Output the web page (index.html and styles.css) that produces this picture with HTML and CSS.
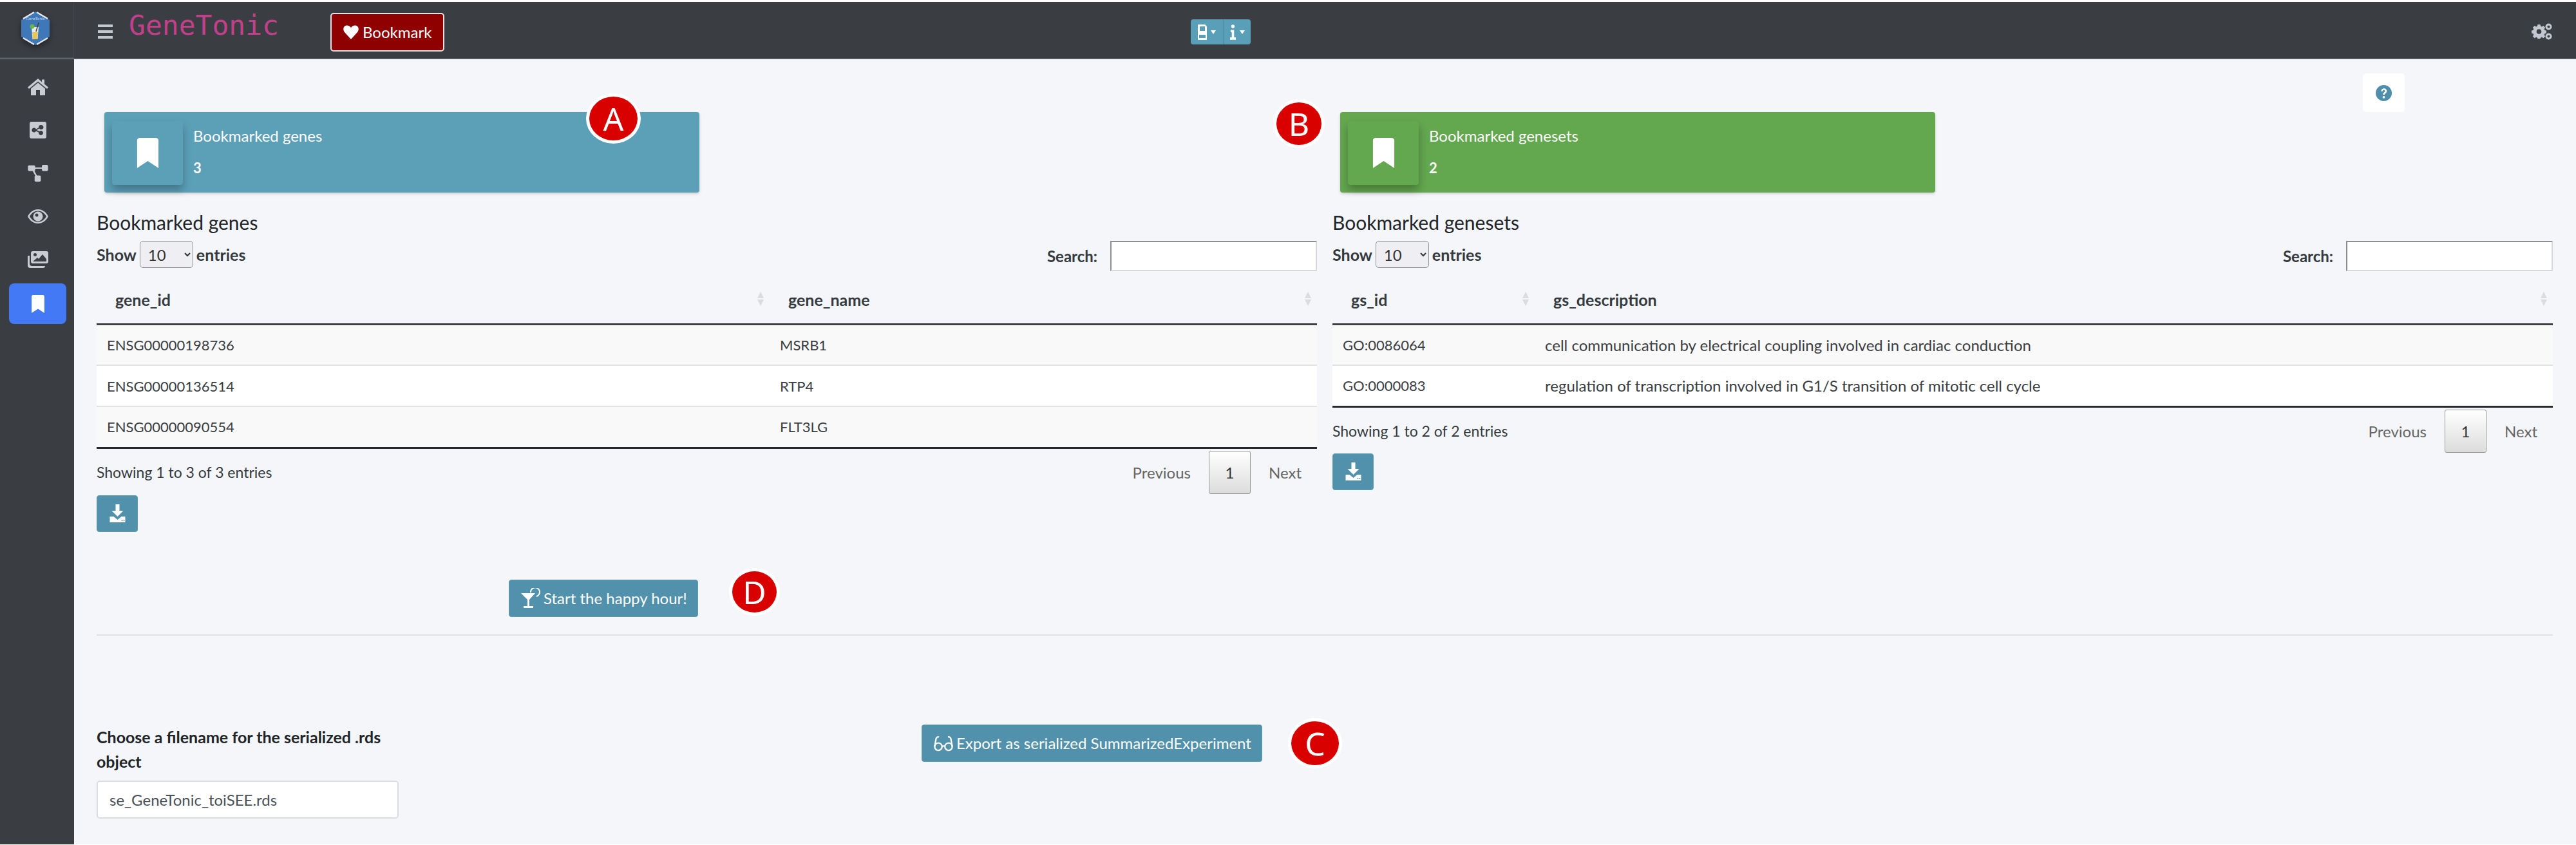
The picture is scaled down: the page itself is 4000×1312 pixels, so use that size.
FILE: index.html
```html
<!DOCTYPE html>
<html lang="en">

<head>
    <meta charset="UTF-8">
    <title>GeneTonic</title>
    <link rel="stylesheet" href="styles.css">
</head>

<body>
    <svg class="defs" width="0" height="0">
        <symbol id="i-bookmark" viewBox="0 0 24 34"><path d="M0 3a3 3 0 0 1 3-3h18a3 3 0 0 1 3 3v31L12 26 0 34z"/></symbol>
        <symbol id="i-download" viewBox="0 0 24 28"><path d="M9 0h6v10h6l-9 9-9-9h6zM0 19h6l6 5 6-5h6v9H0z"/><circle cx="19" cy="25" r="1" fill="#5191ab"/><circle cx="22" cy="25" r="1" fill="#5191ab"/></symbol>
    </svg>

    <header class="topbar">
        <div class="brand">
            <svg class="logo" viewBox="0 0 44 52">
                <path d="M22 0 44 13v26L22 52 0 39V13z" fill="#3f78b8"/>
                <path d="M3 11 20 1M41 11 24 1M3 41l17 10M41 41 24 51" stroke="#e6e8ee" stroke-width="2.4" fill="none"/>
                <path d="M16 24h11l-1.500 19h-8z" fill="#dfeee0"/>
                <path d="M17 32h9l-1 11h-7z" fill="#e6c85a"/>
                <circle cx="17" cy="23" r="3.500" fill="#6fb344"/>
                <path d="M23 31l4-14" stroke="#5a3a2a" stroke-width="1.500"/>
                <text class="logo-text" x="22" y="13" text-anchor="middle">GeneTonic</text>
            </svg>
        </div>
        <div class="topbar-body">
            <div class="hamburger"><span></span><span></span><span></span></div>
            <span class="app-title">GeneTonic</span>
            <button class="bookmark-btn">
                <svg class="heart" viewBox="0 0 24 22"><path d="M12 22 2 11C-1 7 0 2 4 .7 7 0 10 1 12 4c2-3 5-4 8-3.300 4 1.300 5 6.300 2 10.300z"/></svg>
                Bookmark
            </button>
            <div class="center-tools">
                <div class="tool-group">
                    <span class="tool">
                        <svg class="tool-icon" viewBox="0 0 14 24"><path fill-rule="evenodd" d="M1 0h10l3 3v20a1 1 0 0 1-1 1H1a1 1 0 0 1-1-1V1a1 1 0 0 1 1-1zm2 3v7h8V3zm-1 13v5h10v-5z"/></svg>
                        <i class="caret"></i>
                    </span>
                    <span class="tool tool-last">
                        <svg class="tool-icon tool-i" viewBox="0 0 10 26"><circle cx="5" cy="3" r="3"/><path d="M1 9h6v13h3v4H0v-4h3v-9H1z"/></svg>
                        <i class="caret"></i>
                    </span>
                </div>
            </div>
            <svg class="cogs" viewBox="0 0 32 26">
                <g fill="#c2c7d0">
                    <path d="M10.500 5h4l.6 2.600 1.900.8 2.300-1.400 2.800 2.800-1.400 2.300.8 1.900 2.500.6v4l-2.500.6-.8 1.900 1.400 2.300-2.800 2.800-2.300-1.400-1.900.8-.6 1.600h-4l-.6-1.600-1.900-.8-2.300 1.400-2.800-2.800 1.400-2.300-.8-1.900-2.500-.6v-4l2.500-.6.8-1.900-1.400-2.300 2.800-2.800 2.300 1.400 1.900-.8z" transform="translate(-1 -3)"/>
                    <circle cx="26.500" cy="5.500" r="5"/>
                    <circle cx="26.500" cy="20.500" r="5"/>
                </g>
                <circle cx="11.500" cy="13" r="3.800" fill="#3a3d42"/>
                <circle cx="26.500" cy="5.500" r="2" fill="#3a3d42"/>
                <circle cx="26.500" cy="20.500" r="2" fill="#3a3d42"/>
            </svg>
        </div>
    </header>

    <div class="layout">
        <nav class="sidebar">
            <a class="nav-item">
                <svg class="nav-icon" viewBox="0 0 32 26"><path d="M16 0 0 13.500 2 16 16 4.500 30 16l2-2.500-6-5V1.500h-4v3.700zM5 15.500V26h8v-8h6v8h8V15.500L16 6.500z"/></svg>
            </a>
            <a class="nav-item">
                <svg class="nav-icon" viewBox="0 0 26 26"><path fill-rule="evenodd" d="M3 0h20a3 3 0 0 1 3 3v20a3 3 0 0 1-3 3H3a3 3 0 0 1-3-3V3a3 3 0 0 1 3-3zm14.500 5a3.500 3.500 0 0 0-3.400 4.300L10 11.500a3.500 3.500 0 1 0 0 3l4.100 2.200a3.500 3.500 0 1 0 1-1.800L11 12.900v-.2l4.100-2.200A3.500 3.500 0 1 0 17.500 5z"/></svg>
            </a>
            <a class="nav-item">
                <svg class="nav-icon" viewBox="0 0 36 30"><rect x="0" y="1" width="13" height="10" rx="2"/><rect x="25" y="0" width="11" height="11" rx="2"/><rect x="12" y="19" width="11" height="11" rx="2"/><path d="M12 4.500h14v2.500H12zM8 10l2.400-1.300 6 11-2.400 1.300z"/></svg>
            </a>
            <a class="nav-item">
                <svg class="nav-icon" viewBox="0 0 32 22"><path fill-rule="evenodd" d="M16 0C9 0 3.500 4.200 0 11c3.500 6.800 9 11 16 11s12.500-4.200 16-11C28.500 4.200 23 0 16 0zm0 2.500c5.500 0 10 3.200 13 8.500-3 5.300-7.500 8.500-13 8.500S6 16.300 3 11c3-5.300 7.500-8.500 13-8.500z"/><path fill-rule="evenodd" d="M16 3.500a7.500 7.500 0 1 0 0 15 7.500 7.500 0 0 0 0-15zm-2 3a2.500 2.500 0 1 1 0 5 2.500 2.500 0 0 1 0-5z"/></svg>
            </a>
            <a class="nav-item">
                <svg class="nav-icon" viewBox="0 0 32 26"><path fill-rule="evenodd" d="M8 0h21a3 3 0 0 1 3 3v13a3 3 0 0 1-3 3H8a3 3 0 0 1-3-3V3a3 3 0 0 1 3-3zm3.500 3a2.500 2.500 0 1 0 0 5 2.500 2.500 0 0 0 0-5zM8 16h21v-4l-6-7-6 7-2-2z"/><path d="M0 7h3v12a4 4 0 0 0 4 4h20v0a3 3 0 0 1-3 3H4a4 4 0 0 1-4-4z"/></svg>
            </a>
            <a class="nav-item nav-active">
                <svg class="nav-icon nav-icon-active" viewBox="0 0 24 34"><use href="#i-bookmark"/></svg>
            </a>
        </nav>

        <main class="content">
            <div class="help-row">
                <div class="help-box">
                    <svg class="help-icon" viewBox="0 0 24 24"><circle cx="12" cy="12" r="12" fill="#4f8fab"/><path d="M8 9.500C8 6.500 10 5 12.200 5 14.600 5 16.500 6.600 16.500 9c0 3.300-3.200 3.200-3.200 5.500h-2.600c0-3.700 3.100-3.600 3.100-5.500 0-1-.8-1.600-1.800-1.600-1.100 0-1.700.8-1.800 2.100z" fill="#fff"/><circle cx="12" cy="18" r="1.800" fill="#fff"/></svg>
                </div>
            </div>

            <div class="columns">
                <section class="column">
                    <div class="info-card card-blue">
                        <div class="card-icon"><svg class="card-bookmark"><use href="#i-bookmark"/></svg></div>
                        <div class="card-text">
                            <span class="card-label">Bookmarked genes</span>
                            <span class="card-value">3</span>
                        </div>
                        <span class="badge badge-a">A</span>
                    </div>
                    <h4 class="table-title">Bookmarked genes</h4>
                    <div class="table-controls">
                        <label class="length-label">Show
                            <select class="length-select"><option>10</option></select>
                            entries</label>
                        <label class="search-label">Search: <input class="search-input" type="search"></label>
                    </div>
                    <table class="data-table">
                        <thead>
                            <tr>
                                <th class="col-gene-id"><div class="th-inner">gene_id<i class="sort-icon"></i></div></th>
                                <th><div class="th-inner">gene_name<i class="sort-icon"></i></div></th>
                            </tr>
                        </thead>
                        <tbody>
                            <tr><td>ENSG00000198736</td><td>MSRB1</td></tr>
                            <tr><td>ENSG00000136514</td><td>RTP4</td></tr>
                            <tr><td>ENSG00000090554</td><td>FLT3LG</td></tr>
                        </tbody>
                    </table>
                    <div class="table-footer">
                        <span class="table-info">Showing 1 to 3 of 3 entries</span>
                        <div class="pagination"><a class="page-link">Previous</a><a class="page-current">1</a><a class="page-link">Next</a></div>
                    </div>
                    <button class="action-btn download-btn download-a"><svg class="download-icon"><use href="#i-download"/></svg></button>
                    <div class="happy-row">
                        <button class="action-btn happy-btn">
                            <svg class="btn-icon" viewBox="0 0 30 32"><path d="M0 8h22L13 18v10h6v3H4v-3h6V18z"/><path d="M15 7a7 7 0 1 1 9 6" fill="none" stroke="#fff" stroke-width="2"/></svg>
                            Start the happy hour!
                        </button>
                        <span class="badge badge-d">D</span>
                    </div>
                </section>

                <section class="column">
                    <div class="info-card card-green">
                        <div class="card-icon"><svg class="card-bookmark"><use href="#i-bookmark"/></svg></div>
                        <div class="card-text">
                            <span class="card-label">Bookmarked genesets</span>
                            <span class="card-value">2</span>
                        </div>
                        <span class="badge badge-b">B</span>
                    </div>
                    <h4 class="table-title">Bookmarked genesets</h4>
                    <div class="table-controls">
                        <label class="length-label">Show
                            <select class="length-select"><option>10</option></select>
                            entries</label>
                        <label class="search-label">Search: <input class="search-input" type="search"></label>
                    </div>
                    <table class="data-table">
                        <thead>
                            <tr>
                                <th class="col-gs-id"><div class="th-inner">gs_id<i class="sort-icon"></i></div></th>
                                <th><div class="th-inner">gs_description<i class="sort-icon"></i></div></th>
                            </tr>
                        </thead>
                        <tbody>
                            <tr><td>GO:0086064</td><td class="cell-text">cell communication by electrical coupling involved in cardiac conduction</td></tr>
                            <tr><td>GO:0000083</td><td class="cell-text">regulation of transcription involved in G1/S transition of mitotic cell cycle</td></tr>
                        </tbody>
                    </table>
                    <div class="table-footer">
                        <span class="table-info">Showing 1 to 2 of 2 entries</span>
                        <div class="pagination"><a class="page-link">Previous</a><a class="page-current">1</a><a class="page-link">Next</a></div>
                    </div>
                    <button class="action-btn download-btn"><svg class="download-icon"><use href="#i-download"/></svg></button>
                </section>
            </div>

            <hr class="divider">

            <div class="export-row">
                <div class="filename-field">
                    <label class="filename-label">Choose a filename for the serialized .rds object</label>
                    <input class="filename-input" type="text" value="se_GeneTonic_toiSEE.rds">
                </div>
                <div class="export-wrap">
                    <button class="action-btn export-btn">
                        <svg class="btn-icon glasses" viewBox="0 0 34 28"><g fill="none" stroke="#fff" stroke-width="2.600"><circle cx="8" cy="20" r="6.500"/><circle cx="26" cy="20" r="6.500"/><path d="M1.500 20 4 6a4 4 0 0 1 5-3M32.500 20 30 6a4 4 0 0 0-5-3M14 19h6"/></g></svg>
                        Export as serialized SummarizedExperiment
                    </button>
                    <span class="badge badge-c">C</span>
                </div>
            </div>
        </main>
    </div>
</body>

</html>
```

FILE: styles.css
```css
* {
    box-sizing: border-box;
}

html,
body {
    height: 100%;
}

body {
    margin: 0;
    padding-top: 3px;
    background: #fff;
    font-family: 'Lato', 'Noto Sans', sans-serif;
    font-size: 24px;
    color: #343a40;
    overflow: hidden;
}

.defs {
    position: absolute;
}

/* header */

.topbar {
    display: flex;
    height: 89px;
    background: #3a3d42;
    border-bottom: 1px solid #8b8e92;
}

.brand {
    width: 115px;
    height: 88px;
    border-right: 1px solid #42454b;
    border-bottom: 2px solid #4a4f56;
    padding: 15px 0 0 33px;
}

.logo {
    display: block;
    width: 44px;
    height: 52px;
    filter: drop-shadow(0 4px 5px rgba(0, 0, 0, 0.4));
}

.logo-text {
    font-size: 6.500px;
    fill: #b9d3ea;
}

.topbar-body {
    flex: 1;
    display: flex;
    align-items: center;
    padding-left: 37px;
    padding-right: 37px;
}

.hamburger {
    display: flex;
    flex-direction: column;
    gap: 5px;
    width: 23px;
    margin-top: 3px;
}

.hamburger span {
    height: 4px;
    background: #c2c7d0;
}

.app-title {
    margin-left: 25px;
    margin-bottom: 17px;
    width: 313px;
    font-family: 'DejaVu Sans Mono', monospace;
    font-size: 43px;
    color: #c2408a;
}

.bookmark-btn {
    display: flex;
    align-items: center;
    gap: 6px;
    width: 177px;
    height: 60px;
    margin-top: 5px;
    padding: 0 0 0 18px;
    background: #8f0000;
    border: 2px solid #e2e2e2;
    border-radius: 5px;
    font-family: inherit;
    font-size: 24px;
    color: #fff;
}

.heart {
    width: 24px;
    height: 22px;
    fill: #fff;
}

.center-tools {
    flex: 1;
    display: flex;
    margin-left: 1159px;
}

.tool-group {
    display: flex;
    width: 93px;
    height: 39px;
    margin-top: 5px;
    background: #5a9fb8;
    border-radius: 4px;
}

.tool {
    display: flex;
    align-items: center;
    justify-content: center;
    gap: 6px;
    width: 51px;
    border-right: 1px solid #4b8aa2;
}

.tool-last {
    width: 42px;
    border-right: 0;
}

.tool-icon {
    width: 14px;
    height: 24px;
    fill: #fff;
}

.tool-i {
    width: 9px;
}

.caret {
    width: 0;
    height: 0;
    border-left: 4px solid transparent;
    border-right: 4px solid transparent;
    border-top: 6px solid #fff;
}

.cogs {
    width: 32px;
    height: 26px;
    margin-top: 3px;
}

/* sidebar */

.layout {
    display: flex;
    height: 1219px;
}

.sidebar {
    width: 115px;
    flex-shrink: 0;
    display: flex;
    flex-direction: column;
    align-items: center;
    padding: 9px 0 0 2px;
    background: #3a3d42;
}

.nav-item {
    display: flex;
    align-items: center;
    justify-content: center;
    width: 89px;
    height: 67px;
    border-radius: 8px;
}

.nav-active {
    height: 63px;
    margin-top: 4px;
    background: #4479f5;
}

.nav-icon {
    width: 32px;
    height: 26px;
    fill: #c9ccd3;
}

.nav-icon-active {
    width: 22px;
    height: 28px;
    fill: #fff;
}

/* main */

.content {
    flex: 1;
    min-width: 0;
    padding: 22px 36px 0 35px;
    background: #f4f6f9;
}

.help-row {
    display: flex;
    justify-content: flex-end;
    height: 60px;
    padding-right: 230px;
}

.help-box {
    display: flex;
    align-items: center;
    justify-content: center;
    width: 65px;
    height: 60px;
    background: #fff;
    border-radius: 5px;
}

.help-icon {
    width: 25px;
    height: 25px;
}

.columns {
    display: flex;
    gap: 24px;
}

.column {
    flex: 1;
    min-width: 0;
}

.info-card {
    position: relative;
    display: flex;
    width: 924px;
    height: 125px;
    margin-left: 12px;
    border-radius: 4px;
    box-shadow: 0 2px 4px rgba(0, 0, 0, 0.15);
    color: #fff;
}

.card-blue {
    background: #5ca0b8;
}

.card-green {
    background: #63a74f;
}

.card-icon {
    display: flex;
    align-items: center;
    justify-content: center;
    width: 110px;
    height: 99px;
    margin: 14px 16px 0 12px;
    background: inherit;
    border-radius: 4px;
    box-shadow: 0 8px 14px rgba(0, 0, 0, 0.28);
}

.card-bookmark {
    width: 35px;
    height: 47px;
    fill: #fff;
}

.card-text {
    display: flex;
    flex-direction: column;
    padding-top: 22px;
}

.card-label {
    font-size: 24px;
    line-height: 29px;
}

.card-value {
    margin-top: 21px;
    font-size: 22px;
    font-weight: 700;
    line-height: 29px;
}

.badge {
    position: absolute;
    display: flex;
    align-items: center;
    justify-content: center;
    width: 85px;
    height: 78px;
    background: #d90000;
    border: 5px solid #fff;
    border-radius: 50%;
    font-family: 'Noto Sans', sans-serif;
    font-size: 50px;
    color: #fff;
}

.badge-a {
    left: 748px;
    top: -29px;
}

.badge-b {
    left: -104px;
    top: -20px;
    width: 80px;
    height: 76px;
}

.badge-c {
    left: 569px;
    top: -10px;
    width: 84px;
}

.badge-d {
    left: 982px;
    top: -18px;
    width: 79px;
    height: 74px;
}

.table-title {
    margin: 26px 0 0;
    font-size: 30px;
    font-weight: 400;
    line-height: 40px;
    color: #212529;
}

.table-controls {
    display: flex;
    justify-content: space-between;
    height: 47px;
    margin-top: 9px;
    font-weight: 700;
}

.length-label {
    display: flex;
    align-items: center;
    gap: 5px;
    height: 42px;
    font-size: 25px;
}

.length-select {
    width: 83px;
    height: 42px;
    padding-left: 8px;
    background: #efeff3;
    border: 1px solid #8e8e93;
    border-radius: 5px;
    font-family: inherit;
    font-size: 24px;
    color: #333;
}

.search-label {
    display: flex;
    align-items: center;
    gap: 20px;
    height: 47px;
}

.search-input {
    width: 321px;
    height: 47px;
    background: #fff;
    border: 2px solid;
    border-color: #8f8f8f #d8d8dc #d8d8dc #8f8f8f;
}

.data-table {
    width: 100%;
    border-collapse: collapse;
    table-layout: fixed;
}

.data-table th {
    height: 82px;
    padding: 8px 9px 0 29px;
    border-bottom: 3px solid #3b3f44;
    font-size: 25px;
    font-weight: 700;
    text-align: left;
}

.col-gene-id {
    width: 1045px;
}

.col-gs-id {
    width: 314px;
}

.th-inner {
    display: flex;
    align-items: center;
    justify-content: space-between;
}

.sort-icon {
    display: flex;
    flex-direction: column;
    gap: 2px;
    width: 10px;
    margin-top: -2px;
}

.sort-icon::before,
.sort-icon::after {
    content: '';
    border-left: 5px solid transparent;
    border-right: 5px solid transparent;
}

.sort-icon::before {
    border-bottom: 10px solid #dcdce0;
}

.sort-icon::after {
    border-top: 10px solid #dcdce0;
}

.data-table td {
    height: 64px;
    padding: 0 16px;
    border-top: 2px solid #e3e3e6;
    background: #fff;
    font-size: 22px;
    color: #3a3d42;
}

.data-table .cell-text {
    font-size: 24px;
}

.data-table tbody tr:nth-child(odd) td {
    background: #f9f9f9;
}

.data-table tbody tr:first-child td {
    border-top: 0;
}

.data-table tbody tr:last-child td {
    border-bottom: 3px solid #26282b;
}

.table-footer {
    display: flex;
    align-items: center;
    justify-content: space-between;
    height: 67px;
    margin-top: 3px;
}

.table-info {
    font-size: 23px;
}

.pagination {
    display: flex;
    align-items: center;
    margin-right: -4px;
}

.page-link {
    padding: 0 28px;
    color: #666;
}

.page-current {
    display: flex;
    align-items: center;
    justify-content: center;
    width: 65px;
    height: 67px;
    background: linear-gradient(#fff, #dcdcdc);
    border: 1px solid #979797;
    border-radius: 3px;
    color: #333;
}

.action-btn {
    display: flex;
    align-items: center;
    border: 1px solid #5f9cb4;
    border-radius: 4px;
    background: #5191ab;
    font-family: inherit;
    font-size: 24px;
    color: #fff;
}

.download-btn {
    justify-content: center;
    width: 64px;
    height: 57px;
    margin-top: 1px;
    padding: 0;
}

.download-a {
    margin-top: 2px;
}

.download-icon {
    width: 25px;
    height: 28px;
    fill: #fff;
}

.happy-row {
    position: relative;
    display: flex;
    justify-content: flex-end;
    width: 934px;
    margin-top: 74px;
}

.happy-btn {
    gap: 5px;
    width: 294px;
    height: 58px;
    padding: 0 0 0 18px;
}

.btn-icon {
    width: 30px;
    height: 32px;
    fill: #fff;
}

.divider {
    height: 2px;
    margin: 27px 0 0;
    background: #e0e2e6;
    border: 0;
}

.export-row {
    display: flex;
    margin-top: 138px;
}

.filename-field {
    width: 469px;
}

.filename-label {
    display: block;
    font-size: 25px;
    font-weight: 700;
    line-height: 38px;
    color: #212529;
}

.filename-input {
    display: block;
    width: 469px;
    height: 59px;
    margin-top: 11px;
    padding: 0 18px;
    background: #fff;
    border: 2px solid #d9dce1;
    border-radius: 5px;
    font-family: inherit;
    font-size: 24px;
    color: #495057;
}

.export-wrap {
    position: relative;
    margin-left: 812px;
}

.export-btn {
    gap: 5px;
    width: 529px;
    height: 58px;
    padding: 0 0 0 18px;
}

.glasses {
    width: 30px;
    height: 26px;
}
```
